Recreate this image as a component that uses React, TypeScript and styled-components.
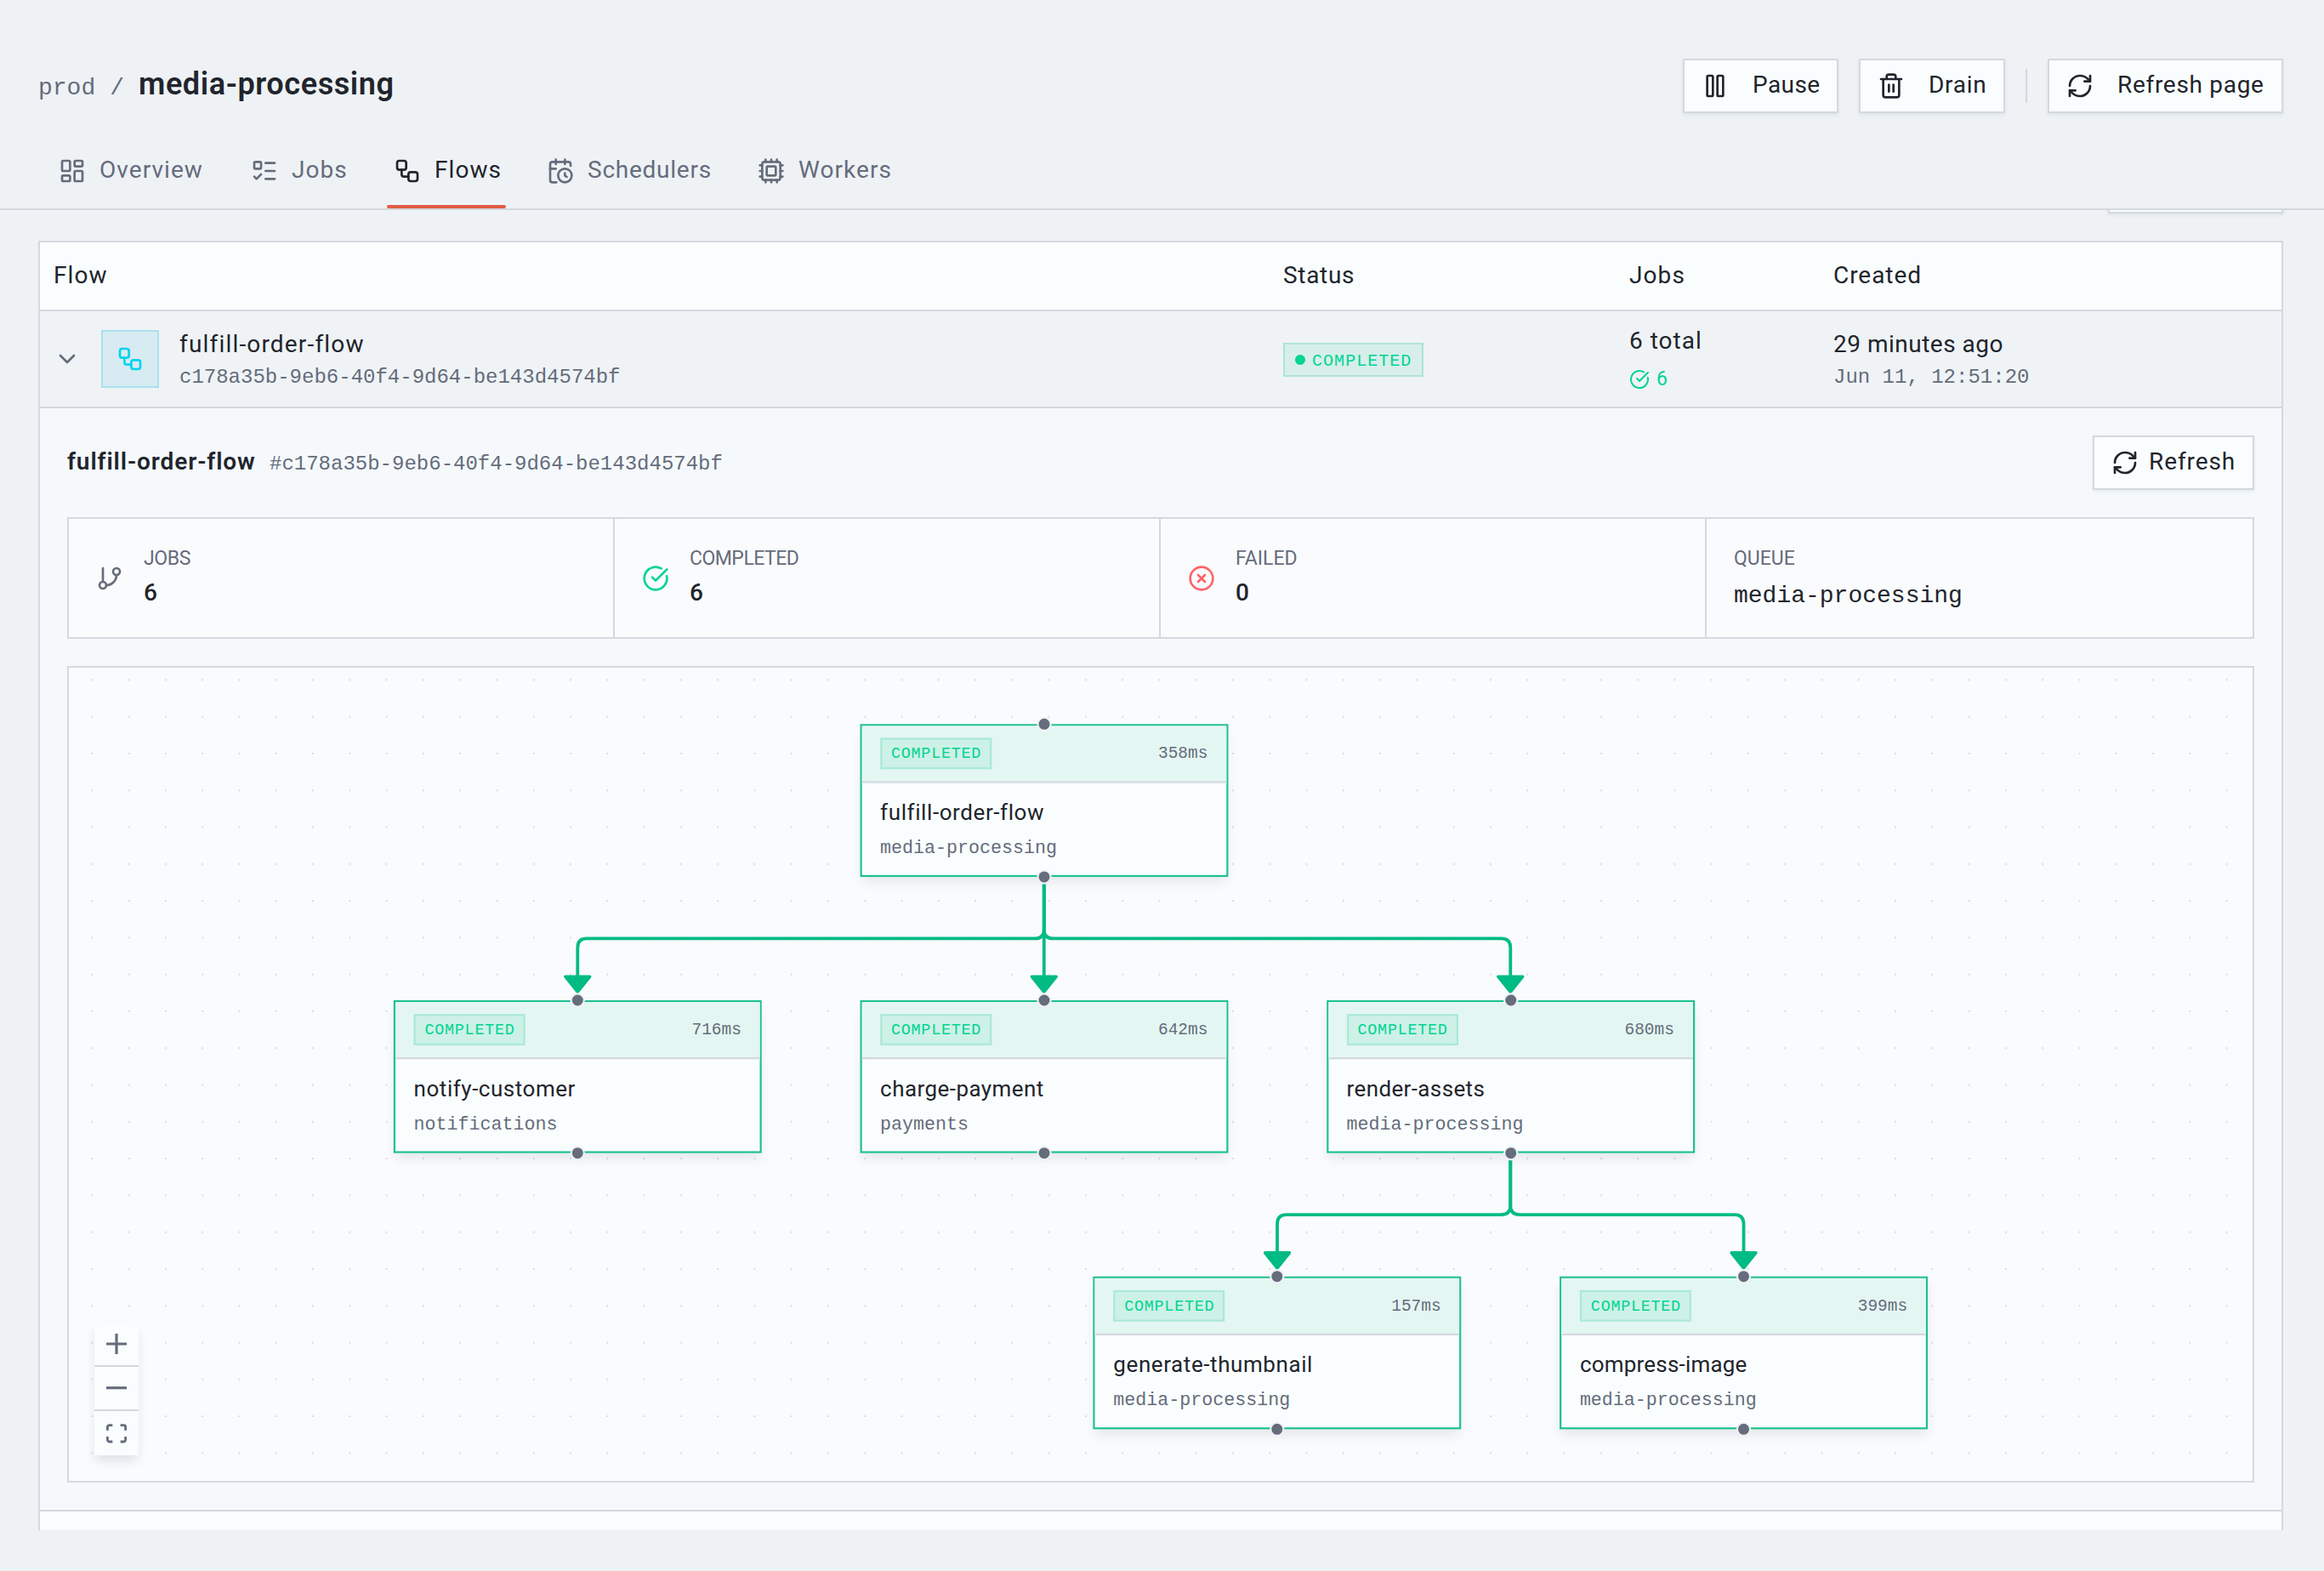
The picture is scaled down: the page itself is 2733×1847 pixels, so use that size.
import {
    ChevronDown,
    CircleCheckBig,
    CircleX,
    CalendarClock,
    Cpu,
    GitBranch,
    LayoutDashboard,
    ListTodo,
    LucideIcon,
    Pause,
    RefreshCw,
    Trash2,
    Workflow,
} from 'lucide-react';
import { ReactNode } from 'react';
import styled, { createGlobalStyle } from 'styled-components';

const colors = {
    page: '#eef2f5',
    surface: '#f9fdfd',
    detail: '#f5f9fc',
    canvas: '#fafbfd',
    border: '#d4d8df',
    text: '#21242c',
    muted: '#656c7b',
    accent: '#e05d41',
    success: '#00d492',
    edge: '#00bb84',
    danger: '#ff6467',
    info: '#00d3f2',
};

const mono = `'Liberation Mono', monospace`;

const GlobalStyle = createGlobalStyle`
    * {
        box-sizing: border-box;
    }

    body {
        margin: 0;
        overflow: hidden;
        background: ${colors.page};
        color: ${colors.text};
        font-family: Roboto, sans-serif;
        font-size: 28px;
    }
`;

const Page = styled.div`
    display: flex;
    flex-direction: column;
    height: 1847px;
    padding-bottom: 48px;
`;

const Header = styled.header`
    height: 247px;
    flex: none;
    padding-top: 69px;
    border-bottom: 2px solid ${colors.border};
`;

const TitleBar = styled.div`
    display: flex;
    justify-content: space-between;
    align-items: center;
    height: 64px;
    padding: 0 48px 0 45px;
`;

const Breadcrumbs = styled.div`
    display: flex;
    align-items: baseline;
    padding-bottom: 4px;
    color: ${colors.muted};
`;

const Crumb = styled.span`
    font-family: ${mono};
    line-height: 28px;
    margin-right: 17px;
`;

const PageTitle = styled.h1`
    margin: 0;
    color: ${colors.text};
    font-size: 36px;
    font-weight: 600;
    line-height: 44px;
    letter-spacing: 0.6px;
`;

const Actions = styled.div`
    display: flex;
    align-items: center;
    gap: 24px;
`;

const Divider = styled.div`
    width: 2px;
    height: 40px;
    background: ${colors.border};
`;

const Button = styled.button<{ $gap?: number }>`
    display: flex;
    align-items: center;
    gap: ${({ $gap }) => $gap ?? 28}px;
    height: 64px;
    padding: 0 20px;
    border: 2px solid ${colors.border};
    background: ${colors.surface};
    color: ${colors.text};
    font: 400 28px Roboto, sans-serif;
    box-shadow: 0 2px 4px rgba(30, 40, 70, 0.07);
`;

const Label = styled.span<{ $width?: number; $spacing?: number }>`
    display: block;
    width: ${({ $width }) => ($width ? `${$width}px` : 'auto')};
    padding-bottom: 3px;
    letter-spacing: ${({ $spacing }) => $spacing ?? 0.7}px;
    line-height: 32px;
    text-align: left;
    white-space: nowrap;
`;

const Tabs = styled.nav`
    display: flex;
    gap: 40px;
    margin-top: 24px;
    padding-left: 61px;
`;

const Tab = styled.a<{ $active?: boolean }>`
    position: relative;
    display: flex;
    align-items: center;
    gap: 16px;
    height: 88px;
    padding: 0 8px;
    color: ${({ $active }) => ($active ? colors.text : colors.muted)};

    &::after {
        content: '';
        position: absolute;
        left: 0;
        right: 0;
        bottom: 0;
        height: 4px;
        border-radius: 2px;
        background: ${({ $active }) => ($active ? colors.accent : 'transparent')};
    }
`;

const Scroller = styled.main`
    flex: 1;
    min-height: 0;
    overflow: hidden;
    padding: 0 48px 0 45px;
`;

const Toolbar = styled.div`
    display: flex;
    justify-content: flex-end;
    margin-top: -60px;
    margin-bottom: 32px;
`;

const ToolbarButton = styled(Button)`
    width: 206px;
`;

const Table = styled.section`
    border: 2px solid ${colors.border};
    background: ${colors.surface};
`;

const Row = styled.div<{ $height: number; $open?: boolean }>`
    display: grid;
    grid-template-columns: 1446px 407px 240px 1fr;
    align-items: center;
    height: ${({ $height }) => $height}px;
    border-bottom: 2px solid ${colors.border};
    background: ${({ $open }) => ($open ? '#eff3f5' : 'transparent')};
`;

const Cell = styled.div`
    padding-left: 16px;
`;

const HeadCell = styled(Cell)`
    padding-top: 2px;
`;

const FlowCell = styled(Cell)`
    display: flex;
    align-items: center;
    gap: 24px;
    color: ${colors.muted};
`;

const IconTile = styled.div`
    display: grid;
    place-items: center;
    width: 68px;
    height: 68px;
    border: 2px solid #a9e1ee;
    background: #d8ebf2;
    color: ${colors.info};
`;

const Primary = styled.div<{ $spacing?: number }>`
    color: ${colors.text};
    line-height: 43px;
    letter-spacing: ${({ $spacing }) => $spacing ?? 0.5}px;
`;

const Secondary = styled.div`
    color: ${colors.muted};
    font-family: ${mono};
    font-size: 24px;
    line-height: 36px;
`;

const JobTotal = styled.div`
    line-height: 40px;
    letter-spacing: 1px;
`;

const JobCount = styled.div`
    display: flex;
    align-items: center;
    gap: 8px;
    height: 36px;
    margin-top: 7px;
    color: ${colors.success};
    font-size: 23px;
`;

const StatusBadge = styled.span`
    display: inline-flex;
    align-items: center;
    gap: 8px;
    height: 40px;
    margin-top: 2px;
    padding: 2px 12px 0;
    border: 2px solid #aee4d5;
    background: #d8eeea;
    color: ${colors.success};
    font-family: ${mono};
    font-size: 20px;
    letter-spacing: 1.04px;
    vertical-align: middle;

    &::before {
        content: '';
        width: 12px;
        height: 12px;
        margin-top: -2px;
        border-radius: 50%;
        background: ${colors.success};
    }
`;

const Detail = styled.div`
    display: flex;
    flex-direction: column;
    gap: 32px;
    padding: 32px;
    border-bottom: 2px solid ${colors.border};
    background: ${colors.detail};
`;

const DetailHead = styled.div`
    display: flex;
    justify-content: space-between;
    align-items: center;
    height: 64px;
`;

const DetailTitle = styled.div`
    display: flex;
    align-items: baseline;
    padding-bottom: 3px;
    font-weight: 600;
    line-height: 40px;
`;

const DetailName = styled.div`
    width: 238px;
    letter-spacing: 0.9px;
    white-space: nowrap;
`;

const FlowId = styled.span`
    color: ${colors.muted};
    font-family: ${mono};
    font-size: 24px;
    font-weight: 400;
    line-height: 24px;
`;

const Stats = styled.div`
    display: grid;
    grid-template-columns: repeat(4, 1fr);
    height: 143px;
    border: 2px solid ${colors.border};
    background: ${colors.canvas};
`;

const Stat = styled.div<{ $color?: string }>`
    display: flex;
    align-items: center;
    gap: 24px;
    padding-left: 32px;
    color: ${({ $color }) => $color ?? colors.muted};

    & + & {
        border-left: 2px solid ${colors.border};
        margin-left: -2px;
    }
`;

const StatLabel = styled.div<{ $spacing?: number }>`
    color: ${colors.muted};
    font-size: 23px;
    line-height: 34px;
    letter-spacing: ${({ $spacing }) => $spacing ?? 0}px;
`;

const StatValue = styled.div`
    color: ${colors.text};
    font-weight: 500;
    line-height: 46px;
`;

const QueueName = styled.span`
    font-family: ${mono};
    font-weight: 400;
    line-height: 1;
    vertical-align: -2px;
`;

/* Flow graph: a free canvas, nodes are placed in canvas units and zoomed */
const ZOOM = 1.0823;
const NODE_WIDTH = 400;
const NODE_HEIGHT = 166;

const Canvas = styled.div`
    position: relative;
    height: 960px;
    overflow: hidden;
    border: 2px solid ${colors.border};
    background-color: ${colors.canvas};
    background-image: radial-gradient(circle, #d9dce1 0.9px, transparent 1.5px);
    background-size: 43.29px 43.29px;
    background-position: 5.66px -7.25px;
`;

const Viewport = styled.div`
    position: absolute;
    top: 0;
    left: 0;
    transform-origin: 0 0;
    transform: translate(381.8px, 66.3px) scale(${ZOOM});
`;

const Edges = styled.svg`
    position: absolute;
    top: 0;
    left: 0;
    overflow: visible;
`;

const Node = styled.div<{ $x: number; $y: number }>`
    position: absolute;
    left: ${({ $x }) => $x}px;
    top: ${({ $y }) => $y}px;
    width: ${NODE_WIDTH}px;
    height: ${NODE_HEIGHT}px;
    border: 2px solid #1cc08f;
    background: ${colors.surface};
    box-shadow: 0 8px 12px -2px rgba(30, 40, 70, 0.1);
`;

const NodeHead = styled.div`
    display: flex;
    justify-content: space-between;
    align-items: center;
    height: 62px;
    padding: 0 20px;
    border-bottom: 2px solid ${colors.border};
    background: #e4f6f2;
    color: ${colors.muted};
    font-family: ${mono};
    font-size: 18px;
`;

const NodeBadge = styled.span`
    width: 121px;
    height: 34px;
    padding-left: 10px;
    border: 2px solid #aae9d6;
    background: #cdf1e6;
    color: ${colors.success};
    font-size: 17px;
    line-height: 31px;
    letter-spacing: 0.66px;
`;

const NodeBody = styled.div`
    padding: 16px 20px;
`;

const NodeName = styled.div<{ $spacing: number }>`
    font-size: 24px;
    line-height: 32px;
    letter-spacing: ${({ $spacing }) => $spacing}px;
    white-space: nowrap;
`;

const NodeQueue = styled.div`
    margin-top: 7px;
    color: ${colors.muted};
    font-family: ${mono};
    font-size: 20px;
    line-height: 32px;
`;

const Handle = styled.i<{ $bottom?: boolean }>`
    position: absolute;
    left: 190px;
    top: ${({ $bottom }) => ($bottom ? NODE_HEIGHT - 10 : -10)}px;
    width: 16px;
    height: 16px;
    border: 2.5px solid ${colors.page};
    border-radius: 50%;
    background: ${colors.muted};
`;

const Controls = styled.div`
    position: absolute;
    left: 30px;
    bottom: 30px;
    display: flex;
    flex-direction: column;
    box-shadow: 0 8px 12px -2px rgba(30, 40, 70, 0.13);
`;

const ControlButton = styled.div`
    display: grid;
    place-items: center;
    width: 52px;
    height: 52px;
    background: ${colors.surface};
    color: ${colors.muted};

    &:not(:last-child) {
        border-bottom: 2px solid ${colors.border};
    }
`;

const tabs: { label: string; icon: LucideIcon; width: number; spacing: number; active?: boolean }[] = [
    { label: 'Overview', icon: LayoutDashboard, width: 122, spacing: 1.05 },
    { label: 'Jobs', icon: ListTodo, width: 64, spacing: 1.05 },
    { label: 'Flows', icon: Workflow, width: 76, spacing: 1.05, active: true },
    { label: 'Schedulers', icon: CalendarClock, width: 144, spacing: 0.75 },
    { label: 'Workers', icon: Cpu, width: 110, spacing: 1.05 },
];

const nodes = [
    { name: 'fulfill-order-flow', queue: 'media-processing', time: '358ms', x: 506.8, y: 0, spacing: 0.55 },
    { name: 'notify-customer', queue: 'notifications', time: '716ms', x: 0, y: 300, spacing: 0.5 },
    { name: 'charge-payment', queue: 'payments', time: '642ms', x: 506.8, y: 300, spacing: 0.42 },
    { name: 'render-assets', queue: 'media-processing', time: '680ms', x: 1013.6, y: 300, spacing: 0.35 },
    { name: 'generate-thumbnail', queue: 'media-processing', time: '157ms', x: 760.2, y: 600, spacing: 0.55 },
    { name: 'compress-image', queue: 'media-processing', time: '399ms', x: 1267, y: 600, spacing: 0.2 },
];

const edges = [
    [0, 1],
    [0, 2],
    [0, 3],
    [3, 4],
    [3, 5],
];

// The line stops short of the target, under the arrow head
function edgePath(sx: number, sy: number, tx: number, ty: number) {
    const end = ty - 6;
    if (sx === tx) return `M${sx} ${sy}V${end}`;

    const mid = (sy + ty) / 2;
    const r = tx > sx ? 10 : -10;

    return `M${sx} ${sy}V${mid - 10}Q${sx} ${mid} ${sx + r} ${mid}H${tx - r}Q${tx} ${mid} ${tx} ${mid + 10}V${end}`;
}

function FlowEdges() {
    return (
        <Edges width="1" height="1" fill="none" stroke={colors.edge}>
            {edges.map(([from, to]) => {
                const sx = nodes[from].x + NODE_WIDTH / 2;
                const sy = nodes[from].y + NODE_HEIGHT + 8;
                const tx = nodes[to].x + NODE_WIDTH / 2;
                const ty = nodes[to].y - 8;

                return (
                    <g key={`${from}-${to}`}>
                        <path d={edgePath(sx, sy, tx, ty)} strokeWidth="3.5" />
                        <path
                            d="M-4-5H4L0 0Z"
                            transform={`translate(${tx} ${ty - 1}) scale(3.33)`}
                            fill={colors.edge}
                            strokeLinejoin="round"
                        />
                    </g>
                );
            })}
        </Edges>
    );
}

function StatItem({
    label,
    icon,
    color,
    spacing,
    children,
}: {
    label: string;
    icon?: ReactNode;
    color?: string;
    spacing?: number;
    children: ReactNode;
}) {
    return (
        <Stat $color={color}>
            {icon}
            <div>
                <StatLabel $spacing={spacing}>{label}</StatLabel>
                <StatValue>{children}</StatValue>
            </div>
        </Stat>
    );
}

export default function App() {
    return (
        <Page>
            <GlobalStyle />

            <Header>
                <TitleBar>
                    <Breadcrumbs>
                        <Crumb>prod</Crumb>
                        <Crumb>/</Crumb>
                        <PageTitle>media-processing</PageTitle>
                    </Breadcrumbs>

                    <Actions>
                        <Button>
                            <Pause size={32} />
                            <Label $width={79} $spacing={0.4}>
                                Pause
                            </Label>
                        </Button>
                        <Button>
                            <Trash2 size={32} />
                            <Label $width={68}>Drain</Label>
                        </Button>
                        <Divider />
                        <Button>
                            <RefreshCw size={32} />
                            <Label $width={173}>Refresh page</Label>
                        </Button>
                    </Actions>
                </TitleBar>

                <Tabs>
                    {tabs.map(({ label, icon: Icon, width, spacing, active }) => (
                        <Tab key={label} $active={active}>
                            <Icon size={32} />
                            <Label $width={width} $spacing={spacing}>
                                {label}
                            </Label>
                        </Tab>
                    ))}
                </Tabs>
            </Header>

            <Scroller>
                <Toolbar>
                    <ToolbarButton />
                </Toolbar>

                <Table>
                    <Row $height={81}>
                        <HeadCell>
                            <Label $spacing={1.1}>Flow</Label>
                        </HeadCell>
                        <HeadCell>
                            <Label>Status</Label>
                        </HeadCell>
                        <HeadCell>
                            <Label $spacing={1.1}>Jobs</Label>
                        </HeadCell>
                        <HeadCell>
                            <Label $spacing={0.95}>Created</Label>
                        </HeadCell>
                    </Row>

                    <Row $height={114} $open>
                        <FlowCell>
                            <ChevronDown size={32} />
                            <IconTile>
                                <Workflow size={32} />
                            </IconTile>
                            <div>
                                <Primary $spacing={1.18}>fulfill-order-flow</Primary>
                                <Secondary>c178a35b-9eb6-40f4-9d64-be143d4574bf</Secondary>
                            </div>
                        </FlowCell>
                        <Cell>
                            <StatusBadge>COMPLETED</StatusBadge>
                        </Cell>
                        <Cell>
                            <JobTotal>6 total</JobTotal>
                            <JobCount>
                                <CircleCheckBig size={24} />6
                            </JobCount>
                        </Cell>
                        <Cell>
                            <Primary>29 minutes ago</Primary>
                            <Secondary>Jun 11, 12:51:20</Secondary>
                        </Cell>
                    </Row>

                    <Detail>
                        <DetailHead>
                            <DetailTitle>
                                <DetailName>fulfill-order-flow</DetailName>
                                <FlowId>#c178a35b-9eb6-40f4-9d64-be143d4574bf</FlowId>
                            </DetailTitle>
                            <Button $gap={12}>
                                <RefreshCw size={32} />
                                <Label $width={102} $spacing={0.9}>
                                    Refresh
                                </Label>
                            </Button>
                        </DetailHead>

                        <Stats>
                            <StatItem label="JOBS" spacing={-0.4} icon={<GitBranch size={32} />}>
                                6
                            </StatItem>
                            <StatItem
                                label="COMPLETED"
                                spacing={-0.5}
                                color={colors.success}
                                icon={<CircleCheckBig size={32} />}
                            >
                                6
                            </StatItem>
                            <StatItem label="FAILED" color={colors.danger} icon={<CircleX size={32} />}>
                                0
                            </StatItem>
                            <StatItem label="QUEUE">
                                <QueueName>media-processing</QueueName>
                            </StatItem>
                        </Stats>

                        <Canvas>
                            <Viewport>
                                <FlowEdges />
                                {nodes.map((node) => (
                                    <Node key={node.name} $x={node.x} $y={node.y}>
                                        <NodeHead>
                                            <NodeBadge>COMPLETED</NodeBadge>
                                            <span>{node.time}</span>
                                        </NodeHead>
                                        <NodeBody>
                                            <NodeName $spacing={node.spacing}>{node.name}</NodeName>
                                            <NodeQueue>{node.queue}</NodeQueue>
                                        </NodeBody>
                                        <Handle />
                                        <Handle $bottom />
                                    </Node>
                                ))}
                            </Viewport>

                            <Controls>
                                <ControlButton>
                                    <svg width="24" height="24" viewBox="0 0 32 32" fill="currentColor">
                                        <path d="M32 18.133H18.133V32h-4.266V18.133H0v-4.266h13.867V0h4.266v13.867H32z" />
                                    </svg>
                                </ControlButton>
                                <ControlButton>
                                    <svg width="24" height="4" viewBox="0 0 32 5" fill="currentColor">
                                        <path d="M0 0h32v4.2H0z" />
                                    </svg>
                                </ControlButton>
                                <ControlButton>
                                    <svg width="24" height="23" viewBox="0 0 32 30" fill="currentColor">
                                        <path d="M3.692 4.63c0-.53.4-.938.939-.938h5.215V0H4.708C2.13 0 0 2.054 0 4.63v5.216h3.692V4.631zM27.354 0h-5.2v3.692h5.17c.53 0 .984.4.984.939v5.215H32V4.631A4.624 4.624 0 0027.354 0zm.954 24.83c0 .532-.4.94-.939.94h-5.215v3.768h5.215c2.577 0 4.631-2.13 4.631-4.707v-5.139h-3.692v5.139zm-23.677.94c-.531 0-.939-.4-.939-.94v-5.138H0v5.139c0 2.577 2.13 4.707 4.708 4.707h5.138V25.77H4.631z" />
                                    </svg>
                                </ControlButton>
                            </Controls>
                        </Canvas>
                    </Detail>

                    <Row $height={114} />
                </Table>
            </Scroller>
        </Page>
    );
}
